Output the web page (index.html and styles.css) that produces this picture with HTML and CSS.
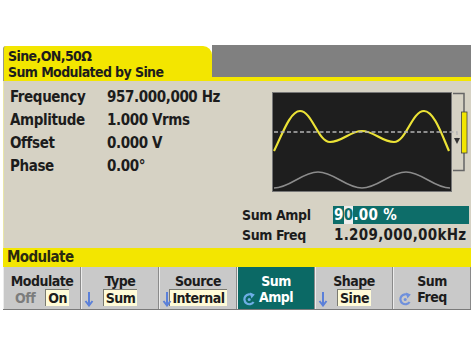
FILE: index.html
```html
<!DOCTYPE html>
<html>
<head>
<meta charset="utf-8">
<link rel="stylesheet" href="styles.css">
</head>
<body>
<div class="screen">
  <div class="header">
    <div class="tab"><div>Sine,ON,50Ω</div><div>Sum Modulated by Sine</div></div>
    <div class="tabfill"></div>
  </div>
  <div class="main">
    <div class="top">
      <div class="params">
        <div class="prow"><span class="plabel">Frequency</span><span class="pval">957.000,000 Hz</span></div>
        <div class="prow"><span class="plabel">Amplitude</span><span class="pval">1.000 Vrms</span></div>
        <div class="prow"><span class="plabel">Offset</span><span class="pval">0.000 V</span></div>
        <div class="prow"><span class="plabel">Phase</span><span class="pval">0.00°</span></div>
      </div>
      <svg class="scope" viewBox="0 0 198 100" width="198" height="100">
        <rect x="0.5" y="0.5" width="179" height="99" fill="#1e1e1e" stroke="#777" stroke-width="1"/>
        <path d="M2,96 C18,96 30,80 46,80 S74,96 90,96 S118,80 134,80 S162,96 178,96" fill="none" stroke="#8c8c8c" stroke-width="1.5"/>
        <path d="M2,59 C10,43 18,19 28,19 C40,19 46,50 58,50 C70,50 78,39 90,39 C102,39 110,50 122,50 C134,50 140,19 152,19 C162,19 170,43 177,59" fill="none" stroke="#ece336" stroke-width="2.2"/>
        <path d="M2,40 H185 V47" fill="none" stroke="#b4b4b4" stroke-width="1.3" stroke-dasharray="4 2.5"/>
        <path d="M182,46 L188,46 L185,52 Z" fill="#333"/>
        <path d="M181,1.5 H192 V78.5 H181" fill="none" stroke="#666" stroke-width="1.5"/>
        <rect x="189.5" y="20" width="5.5" height="41" fill="#f2e600" stroke="#444" stroke-width="0.8"/>
      </svg>
    </div>
    <div class="sums">
      <div class="srow"><span class="slabel">Sum Ampl</span><span class="sval active">9<span class="cursor">0</span>.00 %</span></div>
      <div class="srow"><span class="slabel">Sum Freq</span><span class="sval">1.209,000,00kHz</span></div>
    </div>
  </div>
  <div class="menubar">Modulate</div>
  <div class="keys">
    <div class="key">
      <div>Modulate</div>
      <div class="l2"><span class="off">Off</span><span class="box">On</span></div>
    </div>
    <div class="key">
      <div>Type</div>
      <div class="l2"><span class="box">Sum</span></div>
      <svg class="arrow" viewBox="0 0 10 16" width="10" height="16"><path d="M5 1V14" stroke="#5b80d9" stroke-width="2"/><path d="M1.5 10L5 14.5L8.5 10" fill="none" stroke="#5b80d9" stroke-width="2"/></svg>
    </div>
    <div class="key">
      <div>Source</div>
      <div class="l2"><span class="box">Internal</span></div>
      <svg class="arrow" viewBox="0 0 10 16" width="10" height="16"><path d="M5 1V14" stroke="#5b80d9" stroke-width="2"/><path d="M1.5 10L5 14.5L8.5 10" fill="none" stroke="#5b80d9" stroke-width="2"/></svg>
    </div>
    <div class="key active">
      <div>Sum</div>
      <div>Ampl</div>
      <svg class="knob" viewBox="0 0 13 14" width="13" height="14"><path d="M9.6 3.4 A5 5 0 1 0 10.6 10" fill="none" stroke="#6eaee6" stroke-width="2.2"/><path d="M6.8 0.6 L11.8 2.6 L8.4 6.4 Z" fill="#6eaee6"/><circle cx="6.2" cy="7.6" r="1.5" fill="#6eaee6"/></svg>
    </div>
    <div class="key">
      <div>Shape</div>
      <div class="l2"><span class="box">Sine</span></div>
      <svg class="arrow" viewBox="0 0 10 16" width="10" height="16"><path d="M5 1V14" stroke="#5b80d9" stroke-width="2"/><path d="M1.5 10L5 14.5L8.5 10" fill="none" stroke="#5b80d9" stroke-width="2"/></svg>
    </div>
    <div class="key">
      <div>Sum</div>
      <div>Freq</div>
      <svg class="knob" viewBox="0 0 13 14" width="13" height="14"><path d="M9.6 3.4 A5 5 0 1 0 10.6 10" fill="none" stroke="#6f90dc" stroke-width="2.2"/><path d="M6.8 0.6 L11.8 2.6 L8.4 6.4 Z" fill="#6f90dc"/><circle cx="6.2" cy="7.6" r="1.5" fill="#6f90dc"/></svg>
    </div>
  </div>
</div>
</body>
</html>
```
FILE: styles.css
```css
body {
  margin: 0;
  background: #ffffff;
  font-family: "DejaVu Sans Condensed", "Liberation Sans", Arial, sans-serif;
  font-weight: bold;
  color: #1c1c1c;
}
.screen {
  margin: 45px 0 0 3px;
  width: 468px;
}
.header {
  display: flex;
  height: 36px;
}
.tab {
  width: 209px;
  margin-top: 1px;
  background: #f3e600;
  border-radius: 3px 9px 0 0;
  border-left: 1px solid #9a9a80;
  padding: 2px 0 0 4px;
  box-sizing: border-box;
  font-size: 14px;
  letter-spacing: -0.6px;
  line-height: 16px;
}
.tabfill {
  flex: 1;
  background: #808080;
  border-bottom: 4px solid #f3e600;
}
.main {
  background: #d6d2c4;
  height: 167px;
  border-left: 1px solid #e9e6a8;
  box-sizing: border-box;
}
.top {
  display: flex;
}
.params {
  width: 268px;
  padding: 5px 0 0 6px;
  box-sizing: border-box;
}
.prow {
  display: flex;
  height: 23px;
  line-height: 23px;
  font-size: 15px;
  letter-spacing: -0.4px;
}
.plabel {
  width: 97px;
}
.scope {
  display: block;
  margin-top: 11px;
}
.sums {
  margin-top: 13px;
}
.srow {
  display: flex;
  height: 20px;
  line-height: 20px;
  padding-left: 238px;
}
.slabel {
  width: 91px;
  font-size: 14px;
  letter-spacing: -0.4px;
}
.sval {
  font-size: 15px;
  letter-spacing: 0.3px;
  padding-left: 1px;
}
.sval.active {
  background: #0d6d69;
  color: #ffffff;
  width: 135px;
  height: 18px;
  line-height: 18px;
  margin-top: 1px;
}
.cursor {
  background: #eeeeee;
  color: #0d6d69;
}
.menubar {
  background: #f3e600;
  height: 19px;
  line-height: 19px;
  font-size: 15px;
  letter-spacing: -0.6px;
  padding-left: 4px;
  color: #2a2a10;
}
.keys {
  display: flex;
  height: 43px;
  border-bottom: 1px solid #7a7a7a;
  box-sizing: border-box;
}
.key {
  flex: 1;
  position: relative;
  background: #c9c9c9;
  border-left: 1px solid #ececec;
  border-right: 1px solid #8a8a8a;
  text-align: center;
  font-size: 14px;
  letter-spacing: -0.5px;
  line-height: 16px;
  padding-top: 6px;
  box-sizing: border-box;
}
.key.active {
  background: #0b6965;
  color: #ffffff;
}
.l2 {
  margin-top: 1px;
}
.box {
  background: #fffbd8;
  padding: 0 2px;
  border-top: 1px solid #7a7a70;
  border-left: 1px solid #7a7a70;
}
.off {
  color: #7c7c7c;
  margin-right: 10px;
}
.arrow {
  position: absolute;
  left: 2px;
  bottom: 2px;
}
.knob {
  position: absolute;
  left: 5px;
  bottom: 3px;
}
```
